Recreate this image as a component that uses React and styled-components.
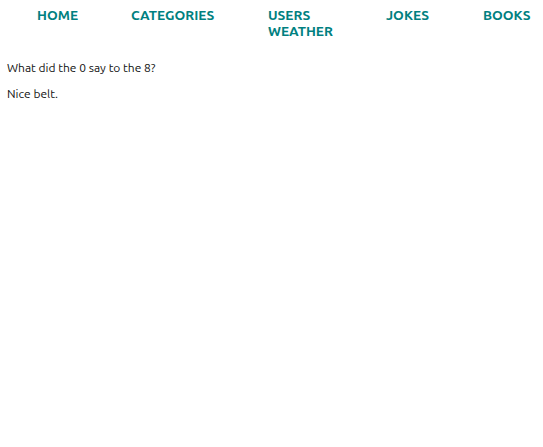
import React from 'react'
import styled, { createGlobalStyle } from 'styled-components'

const GlobalStyle = createGlobalStyle`
body{
  margin:0;
  font-family:"Ubuntu","Open Sans","Noto Sans",sans-serif;
  background:#fff;
}
`

const Page = styled.div`
width:543px;
min-height:447px;
`

const Nav = styled.ul`
list-style:none;
margin:0;
padding:7px 0 0 10px;
display:flex;
width:547px;
box-sizing:border-box;
`

const NavItem = styled.li`
margin:0 27px;
font-size:13.7px;
line-height:16px;
font-weight:700;
color:teal;
width:${props => props.w}px;
flex-shrink:0;
`

const Joke = styled.p`
margin:0;
padding:${props => props.top}px 7px 0;
font-size:12px;
line-height:16px;
color:#111;
`

const links = [
  { label: 'HOME', w: 40 },
  { label: 'CATEGORIES', w: 83 },
  { label: 'USERS WEATHER', w: 64 },
  { label: 'JOKES', w: 43 },
  { label: 'BOOKS', w: 47 },
]

const App = () => {
  return (
    <Page>
      <GlobalStyle />
      <Nav>
        {links.map(l => (
          <NavItem key={l.label} w={l.w}>{l.label}</NavItem>
        ))}
      </Nav>
      <Joke top={21}>What did the 0 say to the 8?</Joke>
      <Joke top={10}>Nice belt.</Joke>
    </Page>
  )
}

export default App
